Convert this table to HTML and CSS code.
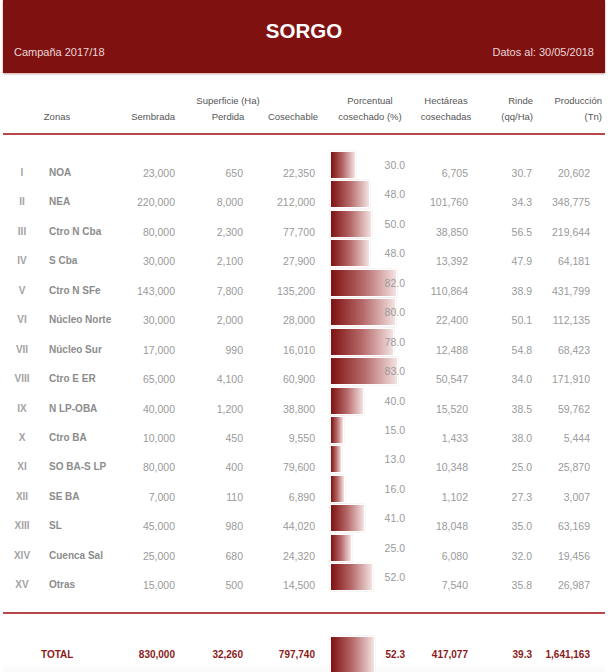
FILE: index.html
```html
<!DOCTYPE html>
<html lang="es">
<head>
<meta charset="utf-8">
<title>Sorgo</title>
<link rel="stylesheet" href="styles.css">
</head>
<body>
<div class="page">
  <header class="band">
    <h1 class="title">SORGO</h1>
    <div class="sub">
      <span>Campaña 2017/18</span>
      <span>Datos al: 30/05/2018</span>
    </div>
  </header>

  <div class="thead">
    <div class="th th-zona">Zonas</div>
    <div class="th th-semb">Sembrada</div>
    <div class="th th-perd"><span class="sup">Superficie (Ha)</span><span>Perdida</span></div>
    <div class="th th-cos">Cosechable</div>
    <div class="th th-pct">Porcentual<br>cosechado (%)</div>
    <div class="th th-hec">Hectáreas<br>cosechadas</div>
    <div class="th th-rin">Rinde<br>(qq/Ha)</div>
    <div class="th th-pro">Producción<br>(Tn)</div>
  </div>

  <div class="tbody">
    <div class="row"><span class="rom">I</span><span class="zona">NOA</span><span class="num">23,000</span><span class="num">650</span><span class="num">22,350</span><span class="pctcell"><span class="bar" style="width:24px"></span><span class="pct">30.0</span></span><span class="num">6,705</span><span class="num">30.7</span><span class="num">20,602</span></div>
    <div class="row"><span class="rom">II</span><span class="zona">NEA</span><span class="num">220,000</span><span class="num">8,000</span><span class="num">212,000</span><span class="pctcell"><span class="bar" style="width:38px"></span><span class="pct">48.0</span></span><span class="num">101,760</span><span class="num">34.3</span><span class="num">348,775</span></div>
    <div class="row"><span class="rom">III</span><span class="zona">Ctro N Cba</span><span class="num">80,000</span><span class="num">2,300</span><span class="num">77,700</span><span class="pctcell"><span class="bar" style="width:40px"></span><span class="pct">50.0</span></span><span class="num">38,850</span><span class="num">56.5</span><span class="num">219,644</span></div>
    <div class="row"><span class="rom">IV</span><span class="zona">S Cba</span><span class="num">30,000</span><span class="num">2,100</span><span class="num">27,900</span><span class="pctcell"><span class="bar" style="width:38px"></span><span class="pct">48.0</span></span><span class="num">13,392</span><span class="num">47.9</span><span class="num">64,181</span></div>
    <div class="row"><span class="rom">V</span><span class="zona">Ctro N SFe</span><span class="num">143,000</span><span class="num">7,800</span><span class="num">135,200</span><span class="pctcell"><span class="bar" style="width:65px"></span><span class="pct">82.0</span></span><span class="num">110,864</span><span class="num">38.9</span><span class="num">431,799</span></div>
    <div class="row"><span class="rom">VI</span><span class="zona">Núcleo Norte</span><span class="num">30,000</span><span class="num">2,000</span><span class="num">28,000</span><span class="pctcell"><span class="bar" style="width:64px"></span><span class="pct">80.0</span></span><span class="num">22,400</span><span class="num">50.1</span><span class="num">112,135</span></div>
    <div class="row"><span class="rom">VII</span><span class="zona">Núcleo Sur</span><span class="num">17,000</span><span class="num">990</span><span class="num">16,010</span><span class="pctcell"><span class="bar" style="width:62px"></span><span class="pct">78.0</span></span><span class="num">12,488</span><span class="num">54.8</span><span class="num">68,423</span></div>
    <div class="row"><span class="rom">VIII</span><span class="zona">Ctro E ER</span><span class="num">65,000</span><span class="num">4,100</span><span class="num">60,900</span><span class="pctcell"><span class="bar" style="width:66px"></span><span class="pct">83.0</span></span><span class="num">50,547</span><span class="num">34.0</span><span class="num">171,910</span></div>
    <div class="row"><span class="rom">IX</span><span class="zona">N LP-OBA</span><span class="num">40,000</span><span class="num">1,200</span><span class="num">38,800</span><span class="pctcell"><span class="bar" style="width:32px"></span><span class="pct">40.0</span></span><span class="num">15,520</span><span class="num">38.5</span><span class="num">59,762</span></div>
    <div class="row"><span class="rom">X</span><span class="zona">Ctro BA</span><span class="num">10,000</span><span class="num">450</span><span class="num">9,550</span><span class="pctcell"><span class="bar" style="width:12px"></span><span class="pct">15.0</span></span><span class="num">1,433</span><span class="num">38.0</span><span class="num">5,444</span></div>
    <div class="row"><span class="rom">XI</span><span class="zona">SO BA-S LP</span><span class="num">80,000</span><span class="num">400</span><span class="num">79,600</span><span class="pctcell"><span class="bar" style="width:10px"></span><span class="pct">13.0</span></span><span class="num">10,348</span><span class="num">25.0</span><span class="num">25,870</span></div>
    <div class="row"><span class="rom">XII</span><span class="zona">SE BA</span><span class="num">7,000</span><span class="num">110</span><span class="num">6,890</span><span class="pctcell"><span class="bar" style="width:13px"></span><span class="pct">16.0</span></span><span class="num">1,102</span><span class="num">27.3</span><span class="num">3,007</span></div>
    <div class="row"><span class="rom">XIII</span><span class="zona">SL</span><span class="num">45,000</span><span class="num">980</span><span class="num">44,020</span><span class="pctcell"><span class="bar" style="width:33px"></span><span class="pct">41.0</span></span><span class="num">18,048</span><span class="num">35.0</span><span class="num">63,169</span></div>
    <div class="row"><span class="rom">XIV</span><span class="zona">Cuenca Sal</span><span class="num">25,000</span><span class="num">680</span><span class="num">24,320</span><span class="pctcell"><span class="bar" style="width:20px"></span><span class="pct">25.0</span></span><span class="num">6,080</span><span class="num">32.0</span><span class="num">19,456</span></div>
    <div class="row"><span class="rom">XV</span><span class="zona">Otras</span><span class="num">15,000</span><span class="num">500</span><span class="num">14,500</span><span class="pctcell"><span class="bar" style="width:41px"></span><span class="pct">52.0</span></span><span class="num">7,540</span><span class="num">35.8</span><span class="num">26,987</span></div>
  </div>

  <div class="total">
    <span class="rom"></span><span class="zona">TOTAL</span><span class="num">830,000</span><span class="num">32,260</span><span class="num">797,740</span><span class="pctcell"><span class="bar" style="width:43px"></span><span class="pct">52.3</span></span><span class="num">417,077</span><span class="num">39.3</span><span class="num">1,641,163</span>
  </div>
</div>
</body>
</html>
```

FILE: styles.css
```css
* { box-sizing: border-box; }
html, body { margin: 0; padding: 0; background: #fff; }
body {
  font-family: "Liberation Sans", Arial, sans-serif;
  width: 608px;
  height: 672px;
  overflow: hidden;
}
.page {
  padding: 0 3px;
}
.band {
  background: #7f1111;
  color: #fff;
  padding: 19px 11px 14px;
  box-shadow: 0 1px 2px rgba(150, 40, 40, 0.45);
}
.title {
  margin: 0;
  text-align: center;
  font-size: 20.5px;
  line-height: 24px;
  font-weight: bold;
}
.sub {
  margin-top: 2px;
  display: flex;
  justify-content: space-between;
  font-size: 11px;
  line-height: 14px;
  color: #ead6d6;
}

/* table header */
.thead {
  display: grid;
  grid-template-columns: 108px 85px 64px 66px 88px 64px 55px 72px;
  padding: 20px 0 8px;
  border-bottom: 2px solid #b4484b;
  font-size: 9.5px;
  line-height: 16px;
  color: #555;
}
.th {
  display: flex;
  flex-direction: column;
  justify-content: flex-end;
  white-space: nowrap;
}
.th-zona { align-items: center; }
.th-semb { align-items: flex-end; padding-right: 21px; }
.th-perd { align-items: center; }
.th-cos  { align-items: center; }
.th-pct  { align-items: center; text-align: center; }
.th-hec  { align-items: center; text-align: center; }
.th-rin  { align-items: flex-end; text-align: right; }
.th-pro  { align-items: flex-end; text-align: right; padding-right: 3px; }

/* body rows */
.tbody {
  margin-top: 17px;
}
.row, .total {
  display: grid;
  grid-template-columns: 38px 79px 55px 68px 72px 90px 63px 64px 58px 15px;
  font-size: 10.5px;
  color: #9a9a9a;
}
.row {
  height: 29.45px;
  line-height: 12px;
}
.row > span { padding-top: 15px; white-space: nowrap; }
.row > .pctcell { padding-top: 0; }
.rom {
  text-align: center;
  font-weight: bold;
  font-size: 10px;
  color: #a3a3a3;
}
.zona {
  padding-left: 8px;
  font-weight: bold;
  font-size: 10px;
  color: #8c8c8c;
}
.num { text-align: right; }
.pctcell {
  display: grid;
}
.pctcell > .bar,
.pctcell > .pct {
  grid-area: 1 / 1;
}
.bar {
  justify-self: start;
  margin-left: 16px;
  height: 26px;
  background: linear-gradient(to right, #7f1111 0%, #b66a6a 50%, #f4e2e2 100%);
  box-shadow: 0 0 0 1px #fff, 0 0 1px 1px rgba(120, 40, 40, 0.25);
}
.pct {
  justify-self: end;
  margin-top: 7px;
  line-height: 12px;
  position: relative;
}

/* total */
.total {
  margin-top: 18px;
  border-top: 2px solid #b4484b;
  padding-top: 23px;
  height: 70px;
  color: #8b1a1a;
  font-weight: bold;
  font-size: 10px;
  line-height: 12px;
  background: linear-gradient(to bottom, rgba(255,255,255,0) 70%, rgba(0,0,0,0.04) 100%);
}
.total > span { padding-top: 12px; white-space: nowrap; }
.total > .pctcell { padding-top: 0; }
.total .zona { padding-left: 0; color: #8b1a1a; }
.total .bar { height: 44px; }
.total .pct { margin-top: 12px; }
```
